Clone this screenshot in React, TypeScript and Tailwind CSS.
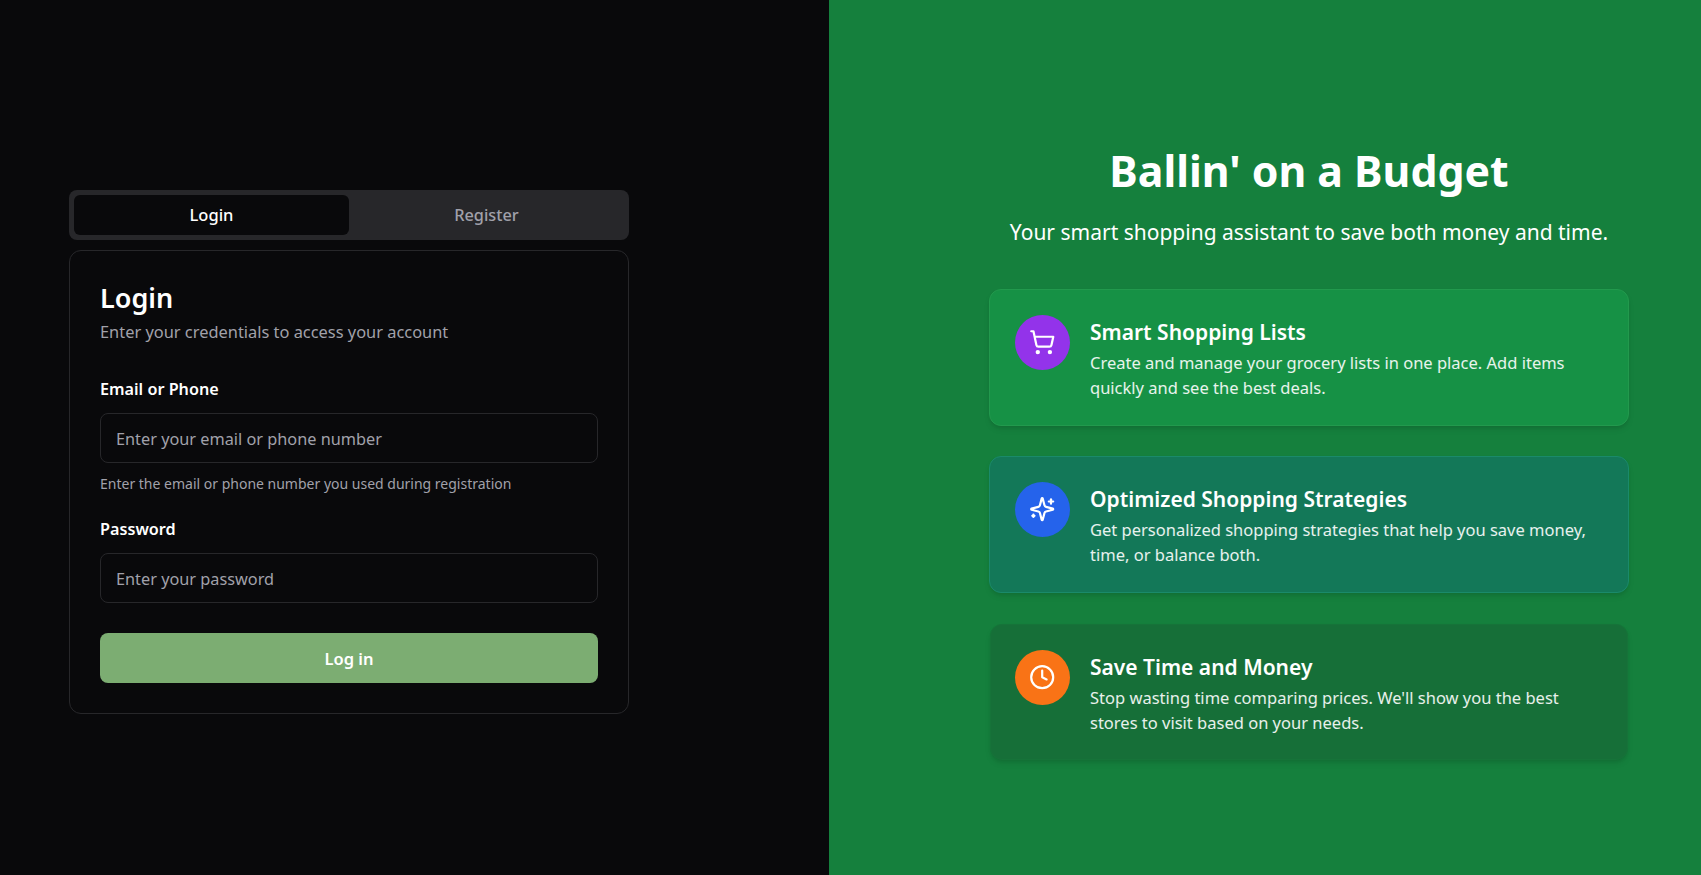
import React from 'react';
import { Clock, ShoppingCart, LucideIcon } from 'lucide-react';

const font = "font-['Noto_Sans',sans-serif]";

const SparkleIcon: React.FC<{ className?: string }> = ({ className }) => (
    <svg viewBox="0 0 24 24" fill="none" stroke="currentColor" strokeWidth={2} strokeLinecap="round" strokeLinejoin="round" className={className}>
        <path d="M9.937 15.5A2 2 0 0 0 8.5 14.063l-6.135-1.582a.5.5 0 0 1 0-.962L8.5 9.936A2 2 0 0 0 9.937 8.5l1.582-6.135a.5.5 0 0 1 .963 0L14.063 8.5A2 2 0 0 0 15.5 9.937l6.135 1.581a.5.5 0 0 1 0 .964L15.5 14.063a2 2 0 0 0-1.437 1.437l-1.582 6.135a.5.5 0 0 1-.963 0z" />
        <path d="M20 3v4" />
        <path d="M22 5h-4" />
        <path d="M4 17v2" />
        <path d="M5 18H3" />
    </svg>
);

interface FeatureProps {
    icon: LucideIcon | React.FC<{ className?: string }>;
    title: string;
    text: string[];
    cardClass: string;
    iconClass: string;
}

const Feature: React.FC<FeatureProps> = ({ icon: Icon, title, text, cardClass, iconClass }) => (
    <div className={`flex gap-5 rounded-xl border p-[25px] shadow-md ${cardClass}`}>
        <div className={`flex h-[55px] w-[55px] shrink-0 items-center justify-center rounded-full ${iconClass}`}>
            <Icon className="h-[26.4px] w-[26.4px] text-white" />
        </div>
        <div className="pt-[4px]">
            <h3 className="mb-[5px] text-[21px] leading-[26px] font-semibold text-white">{title}</h3>
            {text.map((line) => (
                <p key={line} className="text-[16.5px] leading-[25px] whitespace-nowrap text-white/90">
                    {line}
                </p>
            ))}
        </div>
    </div>
);

const Field = ({ label, placeholder }: { label: string; placeholder: string }) => (
    <div>
        <label className="block text-[16.2px] leading-[22px] font-semibold text-white">{label}</label>
        <input
            placeholder={placeholder}
            className="mt-[13px] block h-[50px] w-full rounded-lg border border-[#27272a] bg-[#09090b] px-[15px] pt-[2px] text-[16.3px] text-white outline-none placeholder:text-[#a1a1aa]"
        />
    </div>
);

export default function App() {
    return (
        <div className={`flex h-[875px] w-full overflow-hidden ${font}`}>
            <div className="flex w-[829px] shrink-0 flex-col bg-[#09090b] pt-[190px] pl-[69px]">
                <div className="grid h-[50px] w-[560px] grid-cols-2 rounded-lg bg-[#27272a] p-[5px]">
                    <button className="rounded-md bg-[#09090b] text-[16.5px] font-medium text-white">Login</button>
                    <button className="rounded-md text-[16.3px] font-medium text-[#a1a1aa]">Register</button>
                </div>
                <div className="mt-[10px] flex h-[464px] w-[560px] flex-col rounded-xl border border-[#27272a] px-[30px] pt-[31px]">
                    <h2 className="text-[27px] leading-[32px] font-semibold text-white">Login</h2>
                    <p className="mt-[5px] text-[16.4px] leading-[26px] text-[#a1a1aa]">Enter your credentials to access your account</p>
                    <div className="mt-[33px]">
                        <Field label="Email or Phone" placeholder="Enter your email or phone number" />
                        <p className="mt-[11px] text-[14px] leading-[20px] text-[#a1a1aa]">Enter the email or phone number you used during registration</p>
                    </div>
                    <div className="mt-[24px]">
                        <Field label="Password" placeholder="Enter your password" />
                    </div>
                    <button className="mt-[30px] h-[50px] w-full rounded-lg bg-[#7cad72] pt-[2px] text-[16.5px] font-semibold text-white">Log in</button>
                </div>
            </div>
            <div className="flex flex-1 flex-col bg-[#15803d] pt-[141px] pl-[160px] text-white">
                <div className="w-[640px]">
                    <h1 className="text-center text-[42.8px] leading-[60px] font-bold">Ballin' on a Budget</h1>
                    <p className="mt-[16px] text-center text-[21px] leading-[30px] whitespace-nowrap">Your smart shopping assistant to save both money and time.</p>
                    <div className="mt-[42px] flex flex-col gap-[30px]">
                        <Feature
                            icon={ShoppingCart}
                            title="Smart Shopping Lists"
                            text={['Create and manage your grocery lists in one place. Add items', 'quickly and see the best deals.']}
                            cardClass="h-[137px] border-[#22994d] bg-[#169145]"
                            iconClass="bg-[#9333ea]"
                        />
                        <Feature
                            icon={SparkleIcon}
                            title="Optimized Shopping Strategies"
                            text={['Get personalized shopping strategies that help you save money,', 'time, or balance both.']}
                            cardClass="h-[137px] border-[#1a8a6a] bg-[#137858]"
                            iconClass="bg-[#2563eb]"
                        />
                        <Feature
                            icon={Clock}
                            title="Save Time and Money"
                            text={["Stop wasting time comparing prices. We'll show you the best", 'stores to visit based on your needs.']}
                            cardClass="mx-px mt-px h-[136px] pl-[24px] border-[#167339] bg-[#166f38]"
                            iconClass="bg-[#f97316]"
                        />
                    </div>
                </div>
            </div>
        </div>
    );
}
